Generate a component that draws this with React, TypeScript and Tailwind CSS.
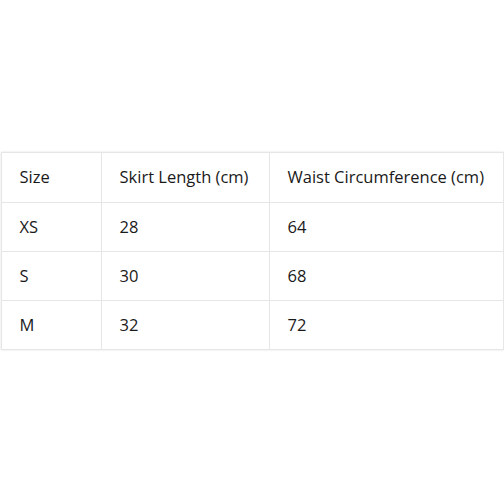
import * as React from "react";

const rows = [
  { size: "XS", length: "28", waist: "64" },
  { size: "S", length: "30", waist: "68" },
  { size: "M", length: "32", waist: "72" },
];

export default function App() {
  return (
    <div
      className="flex h-[504px] w-[504px] items-center justify-center bg-white pb-[2px] text-[#1a1a1a]"
      style={{ fontFamily: '"Open Sans", "Noto Sans", sans-serif' }}
    >
      <table className="w-[502px] table-fixed border-collapse text-[16.5px] shadow-[0_0_2px_rgba(0,0,0,0.12)]">
        <colgroup>
          <col className="w-[100px]" />
          <col className="w-[168px]" />
          <col className="w-[234px]" />
        </colgroup>
        <thead>
          <tr className="h-[50px]">
            <th className="border border-[#e6e6e6] px-[18px] text-left font-normal">Size</th>
            <th className="border border-[#e6e6e6] px-[18px] text-left font-normal">Skirt Length (cm)</th>
            <th className="border border-[#e6e6e6] px-[18px] text-left font-normal">Waist Circumference (cm)</th>
          </tr>
        </thead>
        <tbody>
          {rows.map((row) => (
            <tr key={row.size} className="h-[49px]">
              <td className="border border-[#e6e6e6] px-[18px]">{row.size}</td>
              <td className="border border-[#e6e6e6] px-[18px]">{row.length}</td>
              <td className="border border-[#e6e6e6] px-[18px]">{row.waist}</td>
            </tr>
          ))}
        </tbody>
      </table>
    </div>
  );
}
